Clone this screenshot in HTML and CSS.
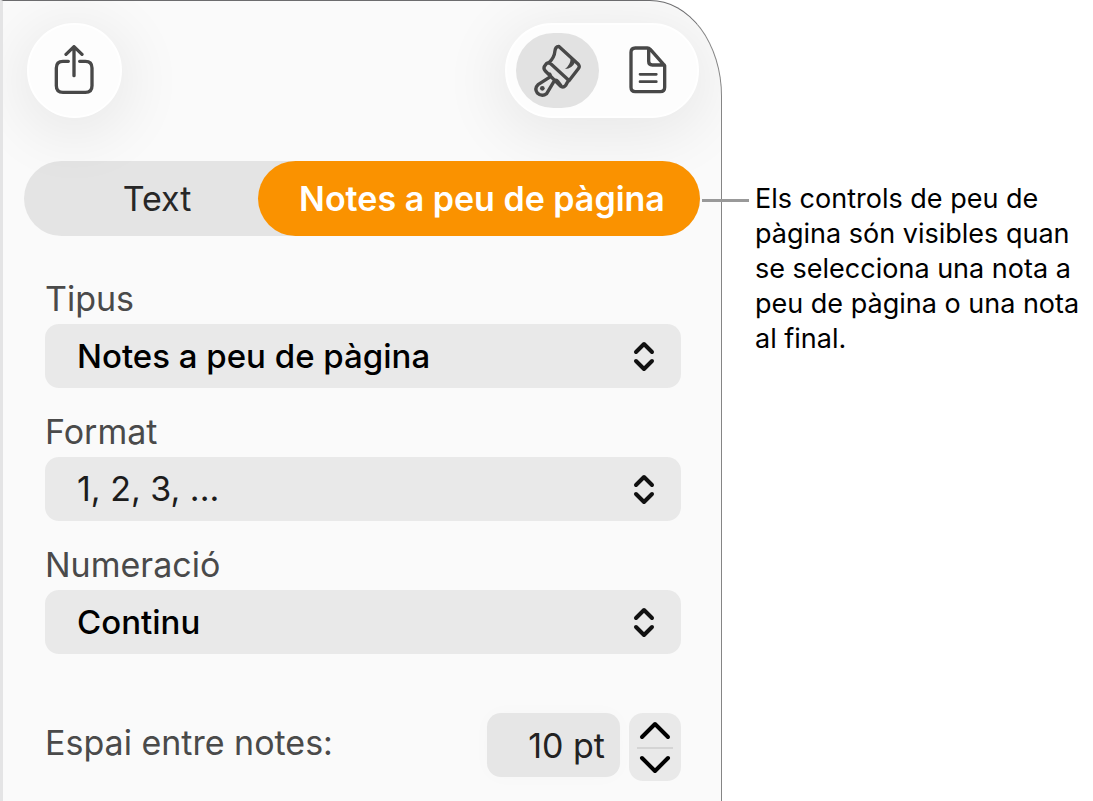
FILE: index.html
```html
<!DOCTYPE html>
<html lang="ca">
<head>
<meta charset="utf-8">
<meta name="viewport" content="width=device-width, initial-scale=1">
<title>Notes a peu de pàgina</title>
<link rel="stylesheet" href="styles.css">
</head>
<body>
<main class="page">
  <section class="panel">
    <header class="toolbar">
      <button class="share" type="button" aria-label="Compartir">
        <svg class="icon" width="42" height="52" viewBox="162 131 126 156" aria-hidden="true">
          <path class="line" d="M205 180h-16q-20 0-20 20v53q0 20 20 20h67q20 0 20-20v-53q0-20-20-20h-17M222 223V137M198 159L222 136L246 159"/>
        </svg>
      </button>
      <div class="tools">
        <button class="tool selected" type="button" aria-label="Format">
          <svg class="icon" width="50" height="56" viewBox="130 127 150 168" aria-hidden="true">
            <path class="line" d="M177 187Q194 172 196 150Q197 138 207 137L266 191Q271 197 267 203L238 240M171 188Q178 184 184 190L233 235Q238 240 233 245L228 254Q220 263 211 255L167 211Q160 204 165 196ZM180 220Q185 226 178 231L145 252Q133 263 143 277Q157 290 171 279L193 242Q198 235 205 243L213 254"/>
            <path class="solid" d="M243 174L256 185Q248 204 226 205Q242 192 243 174Z"/>
            <circle class="solid" cx="158" cy="263" r="7"/>
          </svg>
        </button>
        <button class="tool" type="button" aria-label="Document">
          <svg class="icon" width="40" height="50" viewBox="414 137 120 150" aria-hidden="true">
            <path class="line" d="M472 143H436q-13 0-13 13v105q0 13 13 13h75q13 0 13-13v-65L481 147q-4-4-9-4ZM476 144v39q0 11 11 11h36"/>
            <path class="thin" d="M450 222h49M450 244h49"/>
          </svg>
        </button>
      </div>
    </header>

    <nav class="tabs">
      <button class="tab-text" type="button">Text</button>
      <button class="tab-active" type="button">Notes a peu de pàgina</button>
    </nav>

    <form class="fields">
      <div class="field">
        <label for="type">Tipus</label>
        <div class="picker">
          <select id="type"><option>Notes a peu de pàgina</option></select>
          <svg class="chevrons" width="24" height="32" viewBox="0 0 24 32" aria-hidden="true"><path d="M4 12L12 4L20 12M4 21L12 29L20 21"/></svg>
        </div>
      </div>
      <div class="field">
        <label for="format">Format</label>
        <div class="picker">
          <select id="format" class="muted"><option>1, 2, 3, ...</option></select>
          <svg class="chevrons" width="24" height="32" viewBox="0 0 24 32" aria-hidden="true"><path d="M4 12L12 4L20 12M4 21L12 29L20 21"/></svg>
        </div>
      </div>
      <div class="field">
        <label for="numbering">Numeració</label>
        <div class="picker">
          <select id="numbering"><option>Continu</option></select>
          <svg class="chevrons" width="24" height="32" viewBox="0 0 24 32" aria-hidden="true"><path d="M4 12L12 4L20 12M4 21L12 29L20 21"/></svg>
        </div>
      </div>
      <div class="spacing">
        <label for="gap">Espai entre notes:</label>
        <input id="gap" type="text" value="10 pt">
        <div class="stepper">
          <button type="button" aria-label="Augmentar"><svg width="32" height="20" viewBox="0 0 32 20" aria-hidden="true"><path d="M3 17L16 4L29 17"/></svg></button>
          <button type="button" aria-label="Disminuir"><svg width="32" height="20" viewBox="0 0 32 20" aria-hidden="true"><path d="M3 3L16 16L29 3"/></svg></button>
        </div>
      </div>
    </form>
  </section>

  <aside class="callout">
    <p>Els controls de peu de pàgina són visibles quan se selecciona una nota a peu de pàgina o una nota al final.</p>
  </aside>
</main>
</body>
</html>
```
FILE: styles.css
```css
* {
  box-sizing: border-box;
}

body {
  margin: 0;
  background: #fff;
  font-family: Inter, "Liberation Sans", sans-serif;
}

button,
input,
select {
  margin: 0;
  padding: 0;
  border: 0;
  background: none;
  color: inherit;
  font: inherit;
}

.page {
  display: grid;
  grid-template-columns: 722fr 371fr;
  min-height: 100vh;
}

.panel {
  padding: 22px 21px 18px;
  overflow: hidden;
  border: 1px solid #858585;
  border-top-color: #6c6c6e;
  border-bottom: 0;
  border-left: 3px solid #e4e4e5;
  border-top-right-radius: 72px 96px;
  background: #fafafa;
  font-size: 34px;
  line-height: 40px;
}

.toolbar {
  display: flex;
  justify-content: space-between;
  padding: 0 1px 0 3px;
}

.share,
.tools {
  height: 95px;
  border: 2px solid #fff;
  border-radius: 48px;
  background: #fdfdfd;
  box-shadow: 0 10px 60px 10px rgba(0, 0, 0, 0.07);
}

.share {
  display: grid;
  place-items: center;
  width: 95px;
}

.tools {
  display: flex;
  gap: 7px;
  padding: 8px 8px 8px 9px;
}

.tool {
  display: grid;
  place-items: center;
  width: 83px;
  border-radius: 38px;
}

.selected {
  background: #e2e2e2;
}

.icon {
  color: #484848;
}

.line,
.thin {
  fill: none;
  stroke: currentColor;
  stroke-width: 10;
  stroke-linecap: round;
  stroke-linejoin: round;
}

.thin {
  stroke-width: 8;
}

.solid {
  fill: currentColor;
}

.tabs {
  display: grid;
  grid-template-columns: 234fr 442fr;
  height: 75px;
  margin-top: 43px;
  border-radius: 38px;
  background: #e4e4e4;
}

.tab-text {
  padding-left: 32px;
  color: #272727;
}

.tab-active {
  padding-left: 6px;
  border-radius: 38px;
  background: #fa9200;
  color: #fff;
  font-weight: 600;
}

.fields {
  display: grid;
  gap: 24px;
  padding: 43px 19px 0 21px;
}

.field {
  display: grid;
  gap: 5px;
}

label {
  color: #4a4a4a;
}

.picker {
  display: grid;
  align-items: center;
}

.picker select,
.chevrons {
  grid-area: 1 / 1;
}

.picker select {
  appearance: none;
  width: 100%;
  height: 64px;
  padding: 0 60px 0 32px;
  border-radius: 14px;
  background: #e9e9e9;
  color: #000;
  font-size: 33px;
  font-weight: 500;
}

.picker .muted {
  color: #1c1c1c;
  font-size: 34px;
  font-weight: 400;
}

.chevrons {
  justify-self: end;
  margin-right: 25px;
  fill: none;
  stroke: #111;
  stroke-width: 4;
  stroke-linecap: round;
  stroke-linejoin: round;
  pointer-events: none;
}

.spacing {
  display: flex;
  align-items: flex-start;
  gap: 9px;
  margin-top: 35px;
}

.spacing label {
  flex: 1;
  padding-top: 10px;
}

.spacing input {
  width: 133px;
  height: 64px;
  padding-right: 15px;
  border-radius: 14px;
  background: #e6e6e6;
  box-shadow: 0 0 20px rgba(0, 0, 0, 0.02);
  color: #222;
  text-align: right;
}

.stepper {
  display: grid;
  width: 52px;
  padding: 0 8px;
  border-radius: 14px;
  background: #e9e9e9;
}

.stepper button {
  display: grid;
  place-items: center;
  height: 34px;
}

.stepper button + button {
  border-top: 2px solid #d4d4d4;
}

.stepper svg {
  fill: none;
  stroke: #000;
  stroke-width: 4;
  stroke-linecap: round;
  stroke-linejoin: round;
}

.callout {
  position: relative;
  padding: 181px 4px 0 33px;
  font-size: 27px;
  line-height: 35px;
}

.callout::before {
  content: "";
  position: absolute;
  top: 199px;
  left: -20px;
  width: 47px;
  height: 3px;
  background: #999;
}

.callout p {
  margin: 0;
}
```
